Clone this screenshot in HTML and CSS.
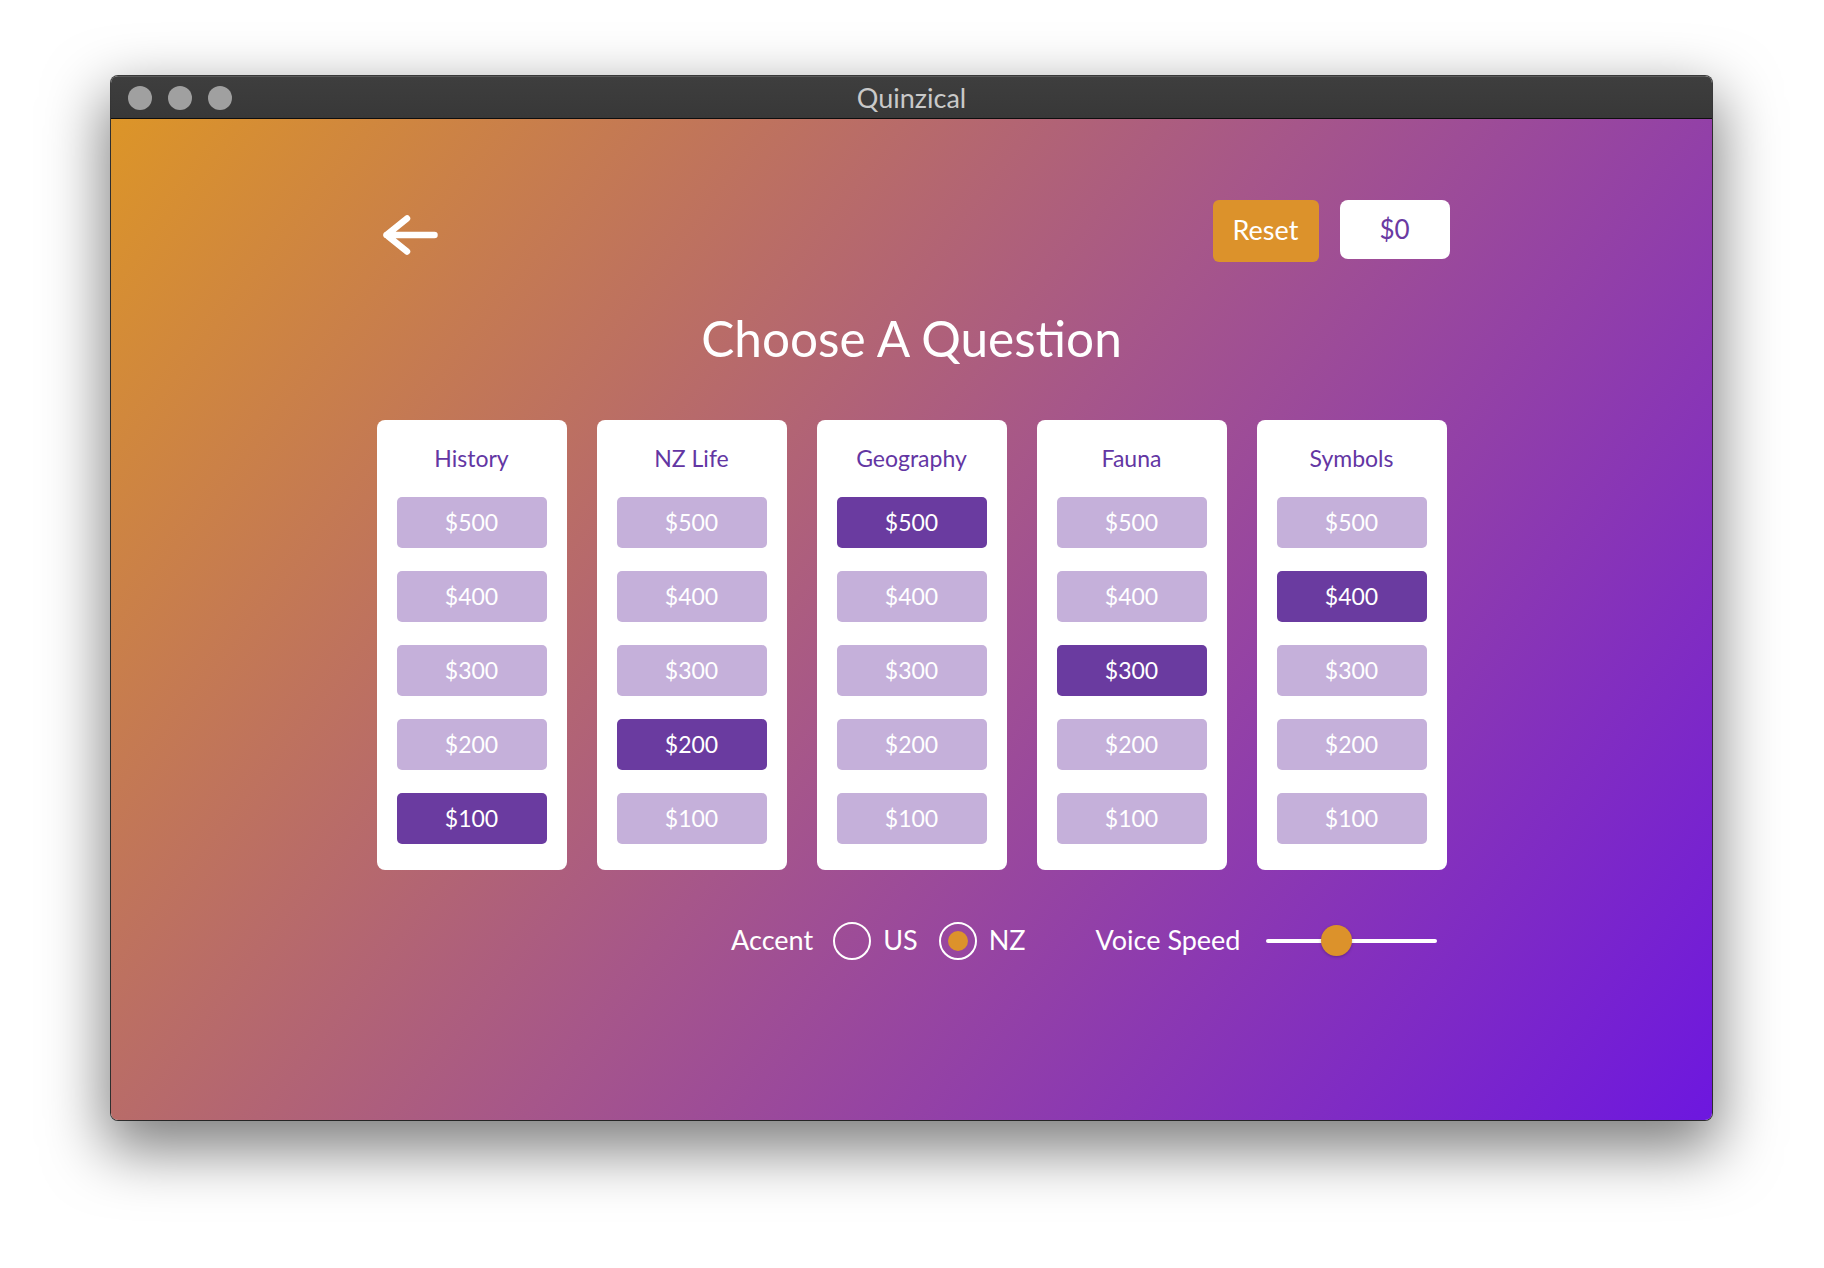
FILE: index.html
```html
<!DOCTYPE html>
<html lang="en">
<head>
<meta charset="utf-8">
<title>Quinzical</title>
<link rel="stylesheet" href="styles.css">
</head>
<body>
<div class="stage">
  <div class="window">
    <div class="titlebar">
      <div class="lights"><span></span><span></span><span></span></div>
      <div class="wtitle">Quinzical</div>
      <div class="spacer"></div>
    </div>
    <div class="content">
      <div class="inner">
        <div class="header">
          <svg class="back" width="60" height="48" viewBox="0 0 60 48" aria-label="Back">
            <path d="M54.5 24 H6.5 M27 7.5 L6.5 24 L27 40.5" fill="none" stroke="#fff" stroke-width="6.5" stroke-linecap="round" stroke-linejoin="round"/>
          </svg>
          <div class="actions">
            <div class="reset">Reset</div>
            <div class="score">$0</div>
          </div>
        </div>
        <h1 class="heading">Choose A Question</h1>
        <div class="board">
          <div class="card">
            <div class="cat">History</div>
            <div class="q">$500</div>
            <div class="q">$400</div>
            <div class="q">$300</div>
            <div class="q">$200</div>
            <div class="q active">$100</div>
          </div>
          <div class="card">
            <div class="cat">NZ Life</div>
            <div class="q">$500</div>
            <div class="q">$400</div>
            <div class="q">$300</div>
            <div class="q active">$200</div>
            <div class="q">$100</div>
          </div>
          <div class="card">
            <div class="cat">Geography</div>
            <div class="q active">$500</div>
            <div class="q">$400</div>
            <div class="q">$300</div>
            <div class="q">$200</div>
            <div class="q">$100</div>
          </div>
          <div class="card">
            <div class="cat">Fauna</div>
            <div class="q">$500</div>
            <div class="q">$400</div>
            <div class="q active">$300</div>
            <div class="q">$200</div>
            <div class="q">$100</div>
          </div>
          <div class="card">
            <div class="cat">Symbols</div>
            <div class="q">$500</div>
            <div class="q active">$400</div>
            <div class="q">$300</div>
            <div class="q">$200</div>
            <div class="q">$100</div>
          </div>
        </div>
        <div class="settings">
          <span class="label">Accent</span>
          <span class="radio"></span>
          <span class="opt">US</span>
          <span class="radio checked"><span class="dot"></span></span>
          <span class="opt">NZ</span>
          <span class="label speed">Voice Speed</span>
          <div class="slider"><span class="thumb"></span></div>
        </div>
      </div>
    </div>
  </div>
</div>
</body>
</html>
```

FILE: styles.css
```css
html, body {
  margin: 0;
  padding: 0;
  background: #ffffff;
}
body {
  width: 1824px;
  height: 1268px;
  overflow: hidden;
  font-family: "Lato", "Open Sans", sans-serif;
}
.stage {
  padding: 76px 0 0 111px;
}
.window {
  width: 1601px;
  height: 1044px;
  border-radius: 7px;
  overflow: hidden;
  box-shadow: 0 0 0 1px rgba(0,0,0,0.75), 0 24px 60px 6px rgba(0,0,0,0.5);
  display: flex;
  flex-direction: column;
}
.titlebar {
  height: 41px;
  flex: none;
  display: grid;
  grid-template-columns: 1fr auto 1fr;
  align-items: center;
  background: linear-gradient(#3e3e3e, #383838);
  border-top: 1px solid #5a5a5a;
  border-bottom: 1px solid #0e0e0e;
  box-sizing: content-box;
}
.lights {
  display: flex;
  gap: 16px;
  padding-left: 17px;
}
.lights span {
  width: 24px;
  height: 24px;
  border-radius: 50%;
  background: #a0a0a0;
}
.wtitle {
  color: #c9c9c9;
  font-size: 27px;
  line-height: 30px;
}
.content {
  flex: 1;
  background: linear-gradient(128deg, #dc9528 0%, #a6568a 50%, #6d17df 100%);
}
.inner {
  width: 1070px;
  margin: 0 auto;
  padding-top: 81px;
}
.header {
  display: flex;
  justify-content: space-between;
  align-items: flex-start;
  height: 62px;
}
.back {
  display: block;
  margin-top: 11px;
  margin-left: 3px;
}
.actions {
  display: flex;
  align-items: flex-start;
  gap: 21px;
  margin-right: -3px;
}
.reset {
  width: 106px;
  height: 62px;
  box-sizing: border-box;
  padding-bottom: 4px;
  border-radius: 6px;
  background: #dc922b;
  color: #fff;
  font-size: 27px;
  display: flex;
  align-items: center;
  justify-content: center;
}
.score {
  width: 110px;
  height: 59px;
  box-sizing: border-box;
  padding-bottom: 2px;
  border-radius: 8px;
  background: #fff;
  color: #6a3aa2;
  font-size: 26px;
  display: flex;
  align-items: center;
  justify-content: center;
}
.heading {
  margin: 46px 0 0;
  text-align: center;
  color: #fff;
  font-weight: 400;
  font-size: 49.5px;
  line-height: 60px;
}
.board {
  margin-top: 52px;
  display: flex;
  gap: 30px;
}
.card {
  width: 190px;
  box-sizing: border-box;
  background: #fff;
  border-radius: 8px;
  padding: 23px 20px 26px;
  display: flex;
  flex-direction: column;
  gap: 23px;
}
.cat {
  color: #6336a3;
  font-size: 23px;
  line-height: 30px;
  text-align: center;
  margin-bottom: 1px;
}
.q {
  height: 51px;
  box-sizing: border-box;
  padding-bottom: 2px;
  border-radius: 5px;
  background: #c5b0da;
  color: #fff;
  font-size: 23px;
  display: flex;
  align-items: center;
  justify-content: center;
}
.q.active {
  background: #6a3ba0;
}
.settings {
  margin-top: 51px;
  height: 40px;
  display: flex;
  align-items: center;
  justify-content: flex-end;
  padding-right: 10px;
  color: #fff;
}
.label {
  font-size: 27px;
  padding-bottom: 3px;
}
.opt {
  font-size: 27px;
  padding-bottom: 3px;
  margin-left: 12px;
}
.radio {
  width: 38px;
  height: 38px;
  box-sizing: border-box;
  border: 2px solid #fff;
  border-radius: 50%;
  margin-left: 20px;
  display: flex;
  align-items: center;
  justify-content: center;
}
.radio.checked {
  margin-left: 21px;
}
.dot {
  width: 20px;
  height: 20px;
  border-radius: 50%;
  background: #dc922b;
}
.speed {
  margin-left: 70px;
}
.slider {
  position: relative;
  width: 171px;
  height: 4px;
  border-radius: 2px;
  background: #fff;
  margin-left: 25px;
}
.thumb {
  position: absolute;
  left: 55px;
  top: -14px;
  width: 31px;
  height: 31px;
  border-radius: 50%;
  background: #dc922b;
  box-shadow: 0 1px 3px rgba(0,0,0,0.25);
}
```
